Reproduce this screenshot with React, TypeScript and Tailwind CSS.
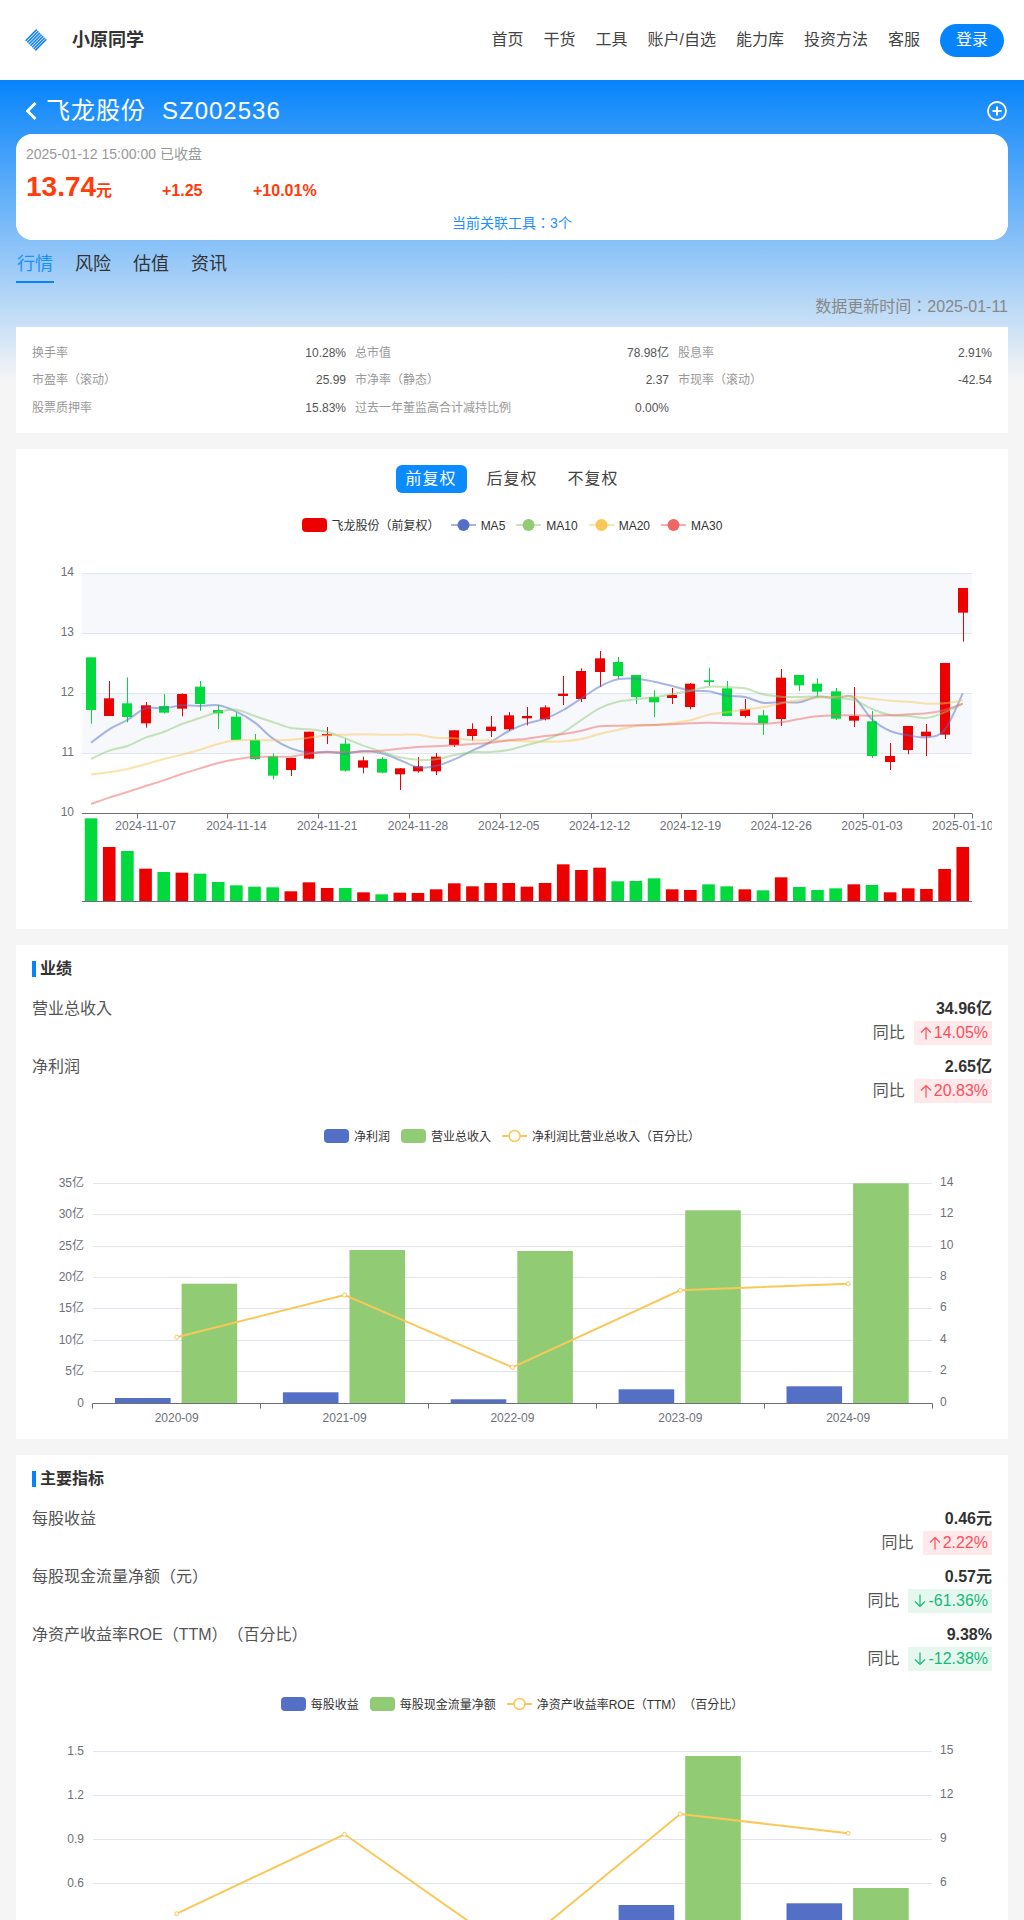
import React from "react"

const NAV = ["首页", "干货", "工具", "账户/自选", "能力库", "投资方法", "客服"]
const TABS = ["行情", "风险", "估值", "资讯"]

const STATS = [
  ["换手率", "10.28%"],
  ["总市值", "78.98亿"],
  ["股息率", "2.91%"],
  ["市盈率（滚动）", "25.99"],
  ["市净率（静态）", "2.37"],
  ["市现率（滚动）", "-42.54"],
  ["股票质押率", "15.83%"],
  ["过去一年董监高合计减持比例", "0.00%"]
]

// candles: [wickTop, bodyTop, bodyBottom, wickBottom, up], y read from the chart at 3x from y=560
const CANDLES: [number, number, number, number, number][] = [
  [292, 292, 450, 491, 0], [363, 415, 468, 468, 1], [352, 430, 471, 487, 0], [426, 436, 490, 503, 1],
  [402, 438, 458, 460, 0], [400, 402, 446, 469, 1], [363, 380, 432, 452, 0], [436, 450, 460, 507, 0],
  [457, 470, 540, 541, 0], [522, 540, 597, 600, 0], [580, 589, 647, 658, 0], [593, 594, 630, 648, 1],
  [515, 515, 596, 597, 1], [501, 522, 527, 552, 1], [536, 551, 632, 635, 0], [590, 601, 623, 640, 1],
  [591, 597, 638, 640, 0], [624, 625, 643, 690, 1], [591, 619, 634, 638, 1], [579, 590, 634, 645, 1],
  [510, 511, 555, 561, 1], [490, 507, 528, 542, 1], [468, 500, 513, 531, 1], [456, 466, 508, 512, 1],
  [441, 468, 475, 496, 1], [436, 442, 478, 481, 1], [348, 401, 408, 435, 1], [325, 333, 417, 426, 1],
  [273, 295, 336, 381, 1], [291, 306, 348, 357, 0], [345, 345, 411, 432, 0], [391, 411, 427, 471, 0],
  [384, 405, 414, 432, 1], [369, 371, 441, 448, 1], [323, 361, 366, 378, 0], [363, 385, 468, 469, 0],
  [417, 448, 468, 473, 1], [450, 466, 490, 525, 0], [327, 353, 477, 498, 1], [345, 345, 376, 393, 0],
  [355, 371, 395, 413, 0], [384, 394, 476, 480, 0], [381, 468, 482, 501, 1], [453, 484, 588, 594, 0],
  [549, 588, 606, 630, 1], [498, 498, 570, 583, 1], [492, 515, 529, 588, 1], [309, 309, 524, 537, 1],
  [84, 84, 158, 245, 1]
]

const VOLUME = [
  775, 861, 873, 926, 936, 938, 941, 966, 976, 980, 982, 994, 967, 984, 984, 997, 1003, 998, 999, 988, 970, 979, 969,
  969, 980, 969, 913, 930, 923, 964, 963, 955, 988, 990, 973, 979, 988, 991, 952, 981, 990, 985, 973, 975, 997, 985,
  987, 927, 861
]

const MA_LINES = [
  {
    color: "#5470c6",
    data: [
      548, 508, 480, 445, 445, 436, 438, 436, 455, 487, 535, 565, 578, 575, 581, 573, 580, 600, 622, 618, 598, 572, 546,
      513, 490, 476, 450, 415, 380, 358, 356, 365, 378, 392, 394, 407, 411, 428, 426, 427, 410, 414, 412, 478, 513, 526,
      532, 510, 400
    ]
  },
  {
    color: "#91cc75",
    data: [
      597, 572, 558, 533, 516, 492, 474, 456, 449, 468, 486, 504, 508, 516, 535, 557, 575, 592, 599, 598, 585, 577, 576,
      570, 555, 540, 517, 480, 445, 425, 418, 412, 402, 392, 380, 381, 385, 403, 410, 411, 410, 415, 420, 447, 465, 468,
      474, 457, 431
    ]
  },
  {
    color: "#fac858",
    data: [
      643, 637, 627, 613, 597, 584, 569, 552, 541, 540, 541, 539, 533, 526, 524, 523, 524, 524, 524, 533, 535, 540, 541,
      542, 544, 545, 544, 537, 522, 510, 498, 495, 489, 481, 464, 457, 449, 442, 430, 420, 413, 410, 410, 416, 422, 425,
      431, 430, 421
    ]
  },
  {
    color: "#ee6666",
    data: [
      732, 713, 696, 678, 661, 642, 625, 609, 598, 591, 590, 590, 581, 577, 576, 575, 572, 566, 561, 559, 556, 552, 548,
      541, 536, 528, 522, 512, 499, 497, 496, 495, 493, 490, 488, 490, 491, 492, 487, 477, 469, 466, 466, 467, 466, 463,
      460, 450, 431
    ]
  }
]

const DATES = [
  "2024-11-07", "2024-11-14", "2024-11-21", "2024-11-28", "2024-12-05",
  "2024-12-12", "2024-12-19", "2024-12-26", "2025-01-03", "2025-01-10"
]

const candleX = (i: number) => 91.08 + i * 18.16
const zoomY = (v: number) => 560 + v / 3

const smoothPath = (pts: [number, number][]) => {
  let d = `M${pts[0][0]} ${pts[0][1]}`
  for (let i = 0; i < pts.length - 1; i++) {
    const p0 = pts[Math.max(i - 1, 0)]
    const p1 = pts[i]
    const p2 = pts[i + 1]
    const p3 = pts[Math.min(i + 2, pts.length - 1)]
    const c1x = p1[0] + (p2[0] - p0[0]) / 6
    const c1y = p1[1] + (p2[1] - p0[1]) / 6
    const c2x = p2[0] - (p3[0] - p1[0]) / 6
    const c2y = p2[1] - (p3[1] - p1[1]) / 6
    d += ` C${c1x} ${c1y} ${c2x} ${c2y} ${p2[0]} ${p2[1]}`
  }
  return d
}

const LegendBar: React.FC<{ color: string; label: string }> = ({ color, label }) => (
  <div className="flex items-center gap-[5px]">
    <span className="w-[25px] h-[14px] rounded-[4px]" style={{ backgroundColor: color }} />
    <span className="pt-[2px]">{label}</span>
  </div>
)

const LegendLine: React.FC<{ color: string; label: string; hollow?: boolean }> = ({ color, label, hollow }) => (
  <div className="flex items-center gap-[5px]">
    <svg width="25" height="14" viewBox="0 0 25 14">
      <line x1="0" y1="7" x2="25" y2="7" stroke={color} strokeWidth="2" opacity={hollow ? 1 : 0.5} />
      {hollow ? (
        <circle cx="12.5" cy="7" r="5.5" fill="#fff" stroke={color} strokeWidth="1.5" />
      ) : (
        <circle cx="12.5" cy="7" r="6" fill={color} />
      )}
    </svg>
    <span className="pt-[2px]">{label}</span>
  </div>
)

const CandleChart: React.FC = () => (
  <svg className="block w-[960px] h-[376px] mt-[13px]" viewBox="32 545 960 376">
    <rect x="82" y="573.5" width="890" height="60" fill="#f6f8fc" />
    <rect x="82" y="693.5" width="890" height="60" fill="#f6f8fc" />
    {[573.5, 633.5, 693.5, 753.5].map((y) => (
      <line key={y} x1="82" x2="972" y1={y} y2={y} stroke="#e0e6f1" />
    ))}
    {[14, 13, 12, 11, 10].map((v, i) => (
      <text key={v} x="74" y={576 + i * 60} textAnchor="end" className="text-[12px] fill-[#6e7079]">
        {v}
      </text>
    ))}
    <line x1="82" x2="972" y1="813.5" y2="813.5" stroke="#6e7079" />
    <line x1="972.5" x2="972.5" y1="813.5" y2="818.5" stroke="#6e7079" />
    {DATES.map((d, i) => (
      <g key={d}>
        <line
          x1={Math.round(136.5 + i * 90.8) + 0.5}
          x2={Math.round(136.5 + i * 90.8) + 0.5}
          y1="813.5"
          y2="818.5"
          stroke="#6e7079"
        />
        <text x={145.6 + i * 90.8} y="830" textAnchor="middle" className="text-[12px] fill-[#6e7079]">
          {d}
        </text>
      </g>
    ))}
    {CANDLES.map(([wt, bt, bb, wb, up], i) => {
      const cx = candleX(i)
      const color = up ? "#ec0000" : "#00da3c"
      return (
        <g key={i}>
          <line
            x1={Math.round(cx) + 0.5}
            x2={Math.round(cx) + 0.5}
            y1={zoomY(wt)}
            y2={zoomY(wb)}
            stroke={color}
          />
          <rect
            x={Math.round(cx - 5)}
            y={zoomY(bt)}
            width="10"
            height={Math.max((bb - bt) / 3, 1)}
            fill={color}
          />
        </g>
      )
    })}
    {MA_LINES.map((m) => (
      <path
        key={m.color}
        d={smoothPath(m.data.map((v, i) => [candleX(i), zoomY(v)]))}
        fill="none"
        stroke={m.color}
        strokeWidth="2"
        opacity="0.5"
      />
    ))}
    {VOLUME.map((top, i) => (
      <rect
        key={i}
        x={candleX(i) - 6.3}
        y={zoomY(top)}
        width="12.6"
        height={901.3 - zoomY(top)}
        fill={CANDLES[i][4] ? "#ec0000" : "#00da3c"}
      />
    ))}
    <line x1="82" x2="972" y1="901.5" y2="901.5" stroke="#6e7079" />
  </svg>
)

interface BarLineChartProps {
  top: number
  height: number
  grid: number[]
  axisY: number
  left: string[]
  right: string[]
  blue: number[]
  green: number[]
  line: number[]
}

const BarLineChart: React.FC<BarLineChartProps> = ({ top, height, grid, axisY, left, right, blue, green, line }) => {
  const centers = [176.7, 344.6, 512.4, 680.3, 848.2]
  return (
    <svg
      className="block w-[960px] mt-[7px]"
      style={{ height }}
      viewBox={`32 ${top} 960 ${height}`}>
      {grid.map((y, i) => (
        <g key={y}>
          <line x1="93" x2="932" y1={y} y2={y} stroke="#e0e6f1" />
          {left[i] && (
            <text x="84" y={y + 3} textAnchor="end" className="text-[12px] fill-[#6e7079]">
              {left[i]}
            </text>
          )}
          {right[i] && (
            <text x="940" y={y + 2} className="text-[12px] fill-[#6e7079]">
              {right[i]}
            </text>
          )}
        </g>
      ))}
      {centers.map((c, i) => (
        <g key={c}>
          <rect x={c - 61.7} y={blue[i]} width="55.6" height={axisY - blue[i]} fill="#5470c6" />
          <rect x={c + 4.9} y={green[i]} width="55.6" height={axisY - green[i]} fill="#91cc75" />
          {axisY < 1920 && (
            <text x={c} y={axisY + 18} textAnchor="middle" className="text-[12px] fill-[#6e7079]">
              {`${2020 + i}-09`}
            </text>
          )}
        </g>
      ))}
      <line x1="92.5" x2="932.5" y1={axisY} y2={axisY} stroke="#6e7079" />
      {[92.5, 260.5, 428.5, 596.5, 764.5, 932.5].map((x) => (
        <line key={x} x1={x} x2={x} y1={axisY} y2={axisY + 5} stroke="#6e7079" />
      ))}
      <polyline
        points={centers.map((c, i) => `${c},${line[i]}`).join(" ")}
        fill="none"
        stroke="#fac858"
        strokeWidth="2"
      />
      {centers.map((c, i) => (
        <circle key={c} cx={c} cy={line[i]} r="2" fill="#fff" stroke="#fac858" />
      ))}
    </svg>
  )
}

const SectionTitle: React.FC<{ title: string }> = ({ title }) => (
  <div className="flex items-center h-4 gap-1">
    <span className="w-1 h-4 bg-[#0784fb]" />
    <h2 className="text-[16px] font-bold text-[#333] leading-4">{title}</h2>
  </div>
)

interface MetricRowProps {
  label: string
  value: string
  change: string
  up: boolean
}

const MetricRow: React.FC<MetricRowProps> = ({ label, value, change, up }) => (
  <div className="flex justify-between text-[16px] leading-6">
    <span className="text-[#555]">{label}</span>
    <div className="flex flex-col items-end">
      <span className="font-bold text-[#333]">{value}</span>
      <div className="flex items-center gap-[9px]">
        <span className="text-[#555]">同比</span>
        <span
          className={
            up
              ? "flex items-center h-6 pl-[6px] pr-1 bg-[#ffe9ea] text-[#ff4d5a]"
              : "flex items-center h-6 pl-[6px] pr-1 bg-[#e6f7ef] text-[#17b978]"
          }>
          <svg className="mr-[2px]" width="12" height="14" viewBox="0 0 12 14" fill="none" stroke="currentColor" strokeWidth="1.2">
            {up ? <path d="M6 13.5V1.5M1 6.5l5-5 5 5" /> : <path d="M6 .5v12M1 7.5l5 5 5-5" />}
          </svg>
          {change}
        </span>
      </div>
    </div>
  </div>
)

export default function App() {
  return (
    <div className="h-[1920px] overflow-hidden bg-[#f5f5f5] font-['Liberation_Sans','Noto_Sans_CJK_TC',sans-serif] [text-spacing-trim:space-all]">
      <header className="h-20 bg-white flex items-center justify-between pl-[24px] pr-5">
        <div className="flex items-center">
          <svg width="24" height="24" viewBox="0 0 24 24">
            <g transform="rotate(-45 12 12)" stroke="#1583ee" strokeWidth="1.6">
              {[5.2, 7.5, 9.8, 12.1, 14.4, 16.7, 18.8].map((y) => (
                <line key={y} x1="4.2" x2="19.8" y1={y} y2={y} />
              ))}
            </g>
          </svg>
          <span className="ml-6 text-[18px] font-bold text-[#333]">小原同学</span>
        </div>
        <nav className="flex items-center gap-5 text-[16px] text-[#444]">
          {NAV.map((n) => (
            <a key={n}>{n}</a>
          ))}
          <button type="button" className="w-16 h-[33px] rounded-full bg-[#0784fb] text-white">
            登录
          </button>
        </nav>
      </header>

      <main className="px-4 bg-[linear-gradient(180deg,#0784fb_0,#f5f5f5_300px)] bg-no-repeat">
        <div className="h-[54px] pt-2 flex items-center text-white text-[24px] tracking-[1px]">
          <svg className="ml-[10px]" width="11" height="18" viewBox="0 0 11 18">
            <polyline points="9.5,1 1.5,9 9.5,17" fill="none" stroke="#fff" strokeWidth="2.8" />
          </svg>
          <span className="ml-[9px]">飞龙股份</span>
          <span className="ml-4">SZ002536</span>
          <svg className="ml-auto mr-[1px]" width="20" height="20" viewBox="0 0 20 20">
            <circle cx="10" cy="10" r="9" fill="none" stroke="#fff" strokeWidth="1.8" />
            <path d="M10 5.5v9M5.5 10h9" stroke="#fff" strokeWidth="2" />
          </svg>
        </div>

        <section className="h-[106px] bg-white rounded-2xl px-[10px] pt-[10px]">
          <p className="text-[14px] leading-5 text-[#999]">2025-01-12 15:00:00 已收盘</p>
          <div className="flex items-baseline mt-[7px] text-[#ff3c0a] font-bold text-[16px] leading-8">
            <span className="w-[136px]">
              <span className="text-[28px]">13.74</span>
              <span>元</span>
            </span>
            <span className="w-[91px]">+1.25</span>
            <span>+10.01%</span>
          </div>
          <p className="mt-[6px] text-center text-[14px] leading-5 text-[#1890ff]">当前关联工具：3个</p>
        </section>

        <div className="flex mt-[10px] h-[33px] gap-5 text-[18px] leading-[29px] text-[#333]">
          {TABS.map((t, i) => (
            <span key={t} className={i === 0 ? "px-px border-b-2 border-[#0784fb] text-[#1890ff]" : "px-px"}>
              {t}
            </span>
          ))}
        </div>

        <p className="h-11 pt-1 flex items-center justify-end text-[16px] text-[#888]">数据更新时间：2025-01-11</p>

        <section className="h-[106px] bg-white px-4 pt-3 grid grid-cols-3 gap-x-[9px] auto-rows-[27.5px] text-[12px]">
          {STATS.map(([k, v]) => (
            <div key={k} className="flex items-center justify-between">
              <span className="text-[#999]">{k}</span>
              <span className="text-[#555]">{v}</span>
            </div>
          ))}
        </section>

        <section className="mt-4 h-[480px] bg-white px-4 pt-4">
          <div className="flex justify-center gap-[10px] text-[16px] tracking-[1px] text-[#444]">
            <button type="button" className="w-[71px] h-7 rounded-md bg-[#0a8bff] text-white">
              前复权
            </button>
            <button type="button" className="w-[71px] h-7">
              后复权
            </button>
            <button type="button" className="w-[71px] h-7">
              不复权
            </button>
          </div>
          <div className="flex justify-center items-center gap-[11px] mt-[25px] h-[14px] text-[12px] text-[#333]">
            <LegendBar color="#ec0000" label="飞龙股份（前复权）" />
            <LegendLine color="#5470c6" label="MA5" />
            <LegendLine color="#91cc75" label="MA10" />
            <LegendLine color="#fac858" label="MA20" />
            <LegendLine color="#ee6666" label="MA30" />
          </div>
          <CandleChart />
        </section>

        <section className="mt-4 h-[494px] bg-white px-4 pt-4">
          <SectionTitle title="业绩" />
          <div className="mt-5 flex flex-col gap-[10px]">
            <MetricRow label="营业总收入" value="34.96亿" change="14.05%" up />
            <MetricRow label="净利润" value="2.65亿" change="20.83%" up />
          </div>
          <div className="flex justify-center items-center gap-[11px] mt-[26px] h-[14px] text-[12px] text-[#333]">
            <LegendBar color="#5470c6" label="净利润" />
            <LegendBar color="#91cc75" label="营业总收入" />
            <LegendLine color="#fac858" label="净利润比营业总收入（百分比）" hollow />
          </div>
          <BarLineChart
            top={1150}
            height={289}
            grid={[1183.5, 1214.5, 1246.5, 1277.5, 1308.5, 1340.5, 1371.5, 1403.5]}
            axisY={1403.5}
            left={["35亿", "30亿", "25亿", "20亿", "15亿", "10亿", "5亿", "0"]}
            right={["14", "12", "10", "8", "6", "4", "2", "0"]}
            blue={[1398, 1392.3, 1399.3, 1389.3, 1386.3]}
            green={[1283.7, 1250, 1251, 1210.3, 1183.3]}
            line={[1337.3, 1295, 1367.3, 1290.3, 1283.7]}
          />
        </section>

        <section className="mt-4 bg-white px-4 pt-4 pb-4">
          <SectionTitle title="主要指标" />
          <div className="mt-5 flex flex-col gap-[10px]">
            <MetricRow label="每股收益" value="0.46元" change="2.22%" up />
            <MetricRow label="每股现金流量净额（元）" value="0.57元" change="-61.36%" up={false} />
            <MetricRow label="净资产收益率ROE（TTM）（百分比）" value="9.38%" change="-12.38%" up={false} />
          </div>
          <div className="flex justify-center items-center gap-[11px] mt-[26px] h-[14px] text-[12px] text-[#333]">
            <LegendBar color="#5470c6" label="每股收益" />
            <LegendBar color="#91cc75" label="每股现金流量净额" />
            <LegendLine color="#fac858" label="净资产收益率ROE（TTM）（百分比）" hollow />
          </div>
          <BarLineChart
            top={1718}
            height={280}
            grid={[1751.5, 1795.5, 1839.5, 1883.5, 1927.5, 1971.5]}
            axisY={1971.5}
            left={["1.5", "1.2", "0.9", "0.6"]}
            right={["15", "12", "9", "6"]}
            blue={[1950, 1935, 1958, 1905, 1903.3]}
            green={[1940, 1925, 1945, 1756, 1888]}
            line={[1913.7, 1834.3, 1952, 1814, 1833.3]}
          />
        </section>
      </main>
    </div>
  )
}
